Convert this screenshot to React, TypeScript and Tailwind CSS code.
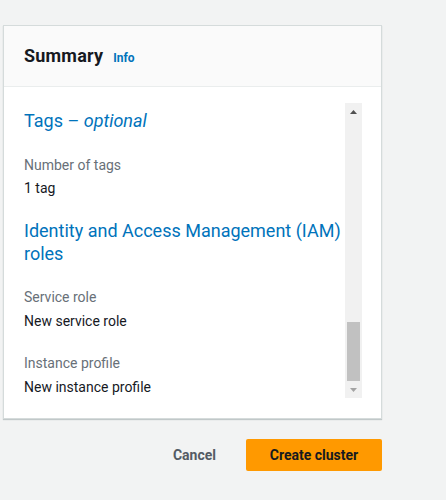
import React from "react";

export default function App() {
  const font = { fontFamily: 'Roboto, "Noto Sans", Arial, sans-serif' };
  return (
    <div className="w-[446px] h-[500px] bg-[#f2f3f3] overflow-hidden" style={font}>
      <div className="pt-[25px] pl-[3px]">
        <div className="w-[379px] h-[394px] bg-white border border-[#d5dbdb] shadow-[0_1px_1px_rgba(0,28,36,0.2)] flex flex-col">
          <div className="h-[63px] bg-[#fafafa] border-b border-[#eaeded] flex items-center px-[20px]">
            <div className="flex items-baseline gap-[10px]">
              <span className="text-[18px] font-bold text-[#16191f] leading-[22px] tracking-[0.2px]">Summary</span>
              <span className="text-[12px] font-bold text-[#0073bb] leading-[16px]">Info</span>
            </div>
          </div>
          <div className="flex-1 flex pt-[16px] pb-[20px] pl-[20px] pr-[19px]">
            <div className="flex-1 flex flex-col overflow-hidden">
              <div className="mt-[7px] text-[18px] leading-[22px] text-[#0073bb]">
                Tags – <span className="italic">optional</span>
              </div>
              <div className="mt-[22px] text-[14px] leading-[22px] text-[#687078]">Number of tags</div>
              <div className="mt-[1px] text-[14px] leading-[22px] text-[#16191f]">1 tag</div>
              <div className="mt-[20px] text-[18px] leading-[23px] text-[#0073bb]">
                Identity and Access Management (IAM) roles
              </div>
              <div className="mt-[21px] text-[14px] leading-[22px] text-[#687078]">Service role</div>
              <div className="mt-[2px] text-[14px] leading-[22px] text-[#16191f]">New service role</div>
              <div className="mt-[20px] text-[14px] leading-[22px] text-[#687078]">Instance profile</div>
              <div className="mt-[2px] text-[14px] leading-[22px] text-[#16191f]">New instance profile</div>
            </div>
            <div className="w-[17px] bg-[#f1f1f1] flex flex-col items-center">
              <div className="h-[17px] w-full flex items-center justify-center">
                <svg width="7" height="4" viewBox="0 0 7 4"><path d="M0 4 L3.5 0 L7 4 Z" fill="#505050" /></svg>
              </div>
              <div className="flex-1 w-full flex flex-col justify-end px-[2px]">
                <div className="h-[59px] bg-[#c1c1c1]" />
              </div>
              <div className="h-[17px] w-full flex items-center justify-center">
                <svg width="7" height="4" viewBox="0 0 7 4"><path d="M0 0 L7 0 L3.5 4 Z" fill="#a3a3a3" /></svg>
              </div>
            </div>
          </div>
        </div>
        <div className="w-[379px] flex justify-end items-center mt-[20px]">
          <button className="text-[14px] font-bold text-[#545b64] leading-[20px] px-[20px] mr-[10px]">Cancel</button>
          <button className="w-[136px] h-[32px] rounded-[2px] bg-[#ff9900] text-[14px] font-bold text-[#16191f] leading-[20px]">
            Create cluster
          </button>
        </div>
      </div>
    </div>
  );
}
